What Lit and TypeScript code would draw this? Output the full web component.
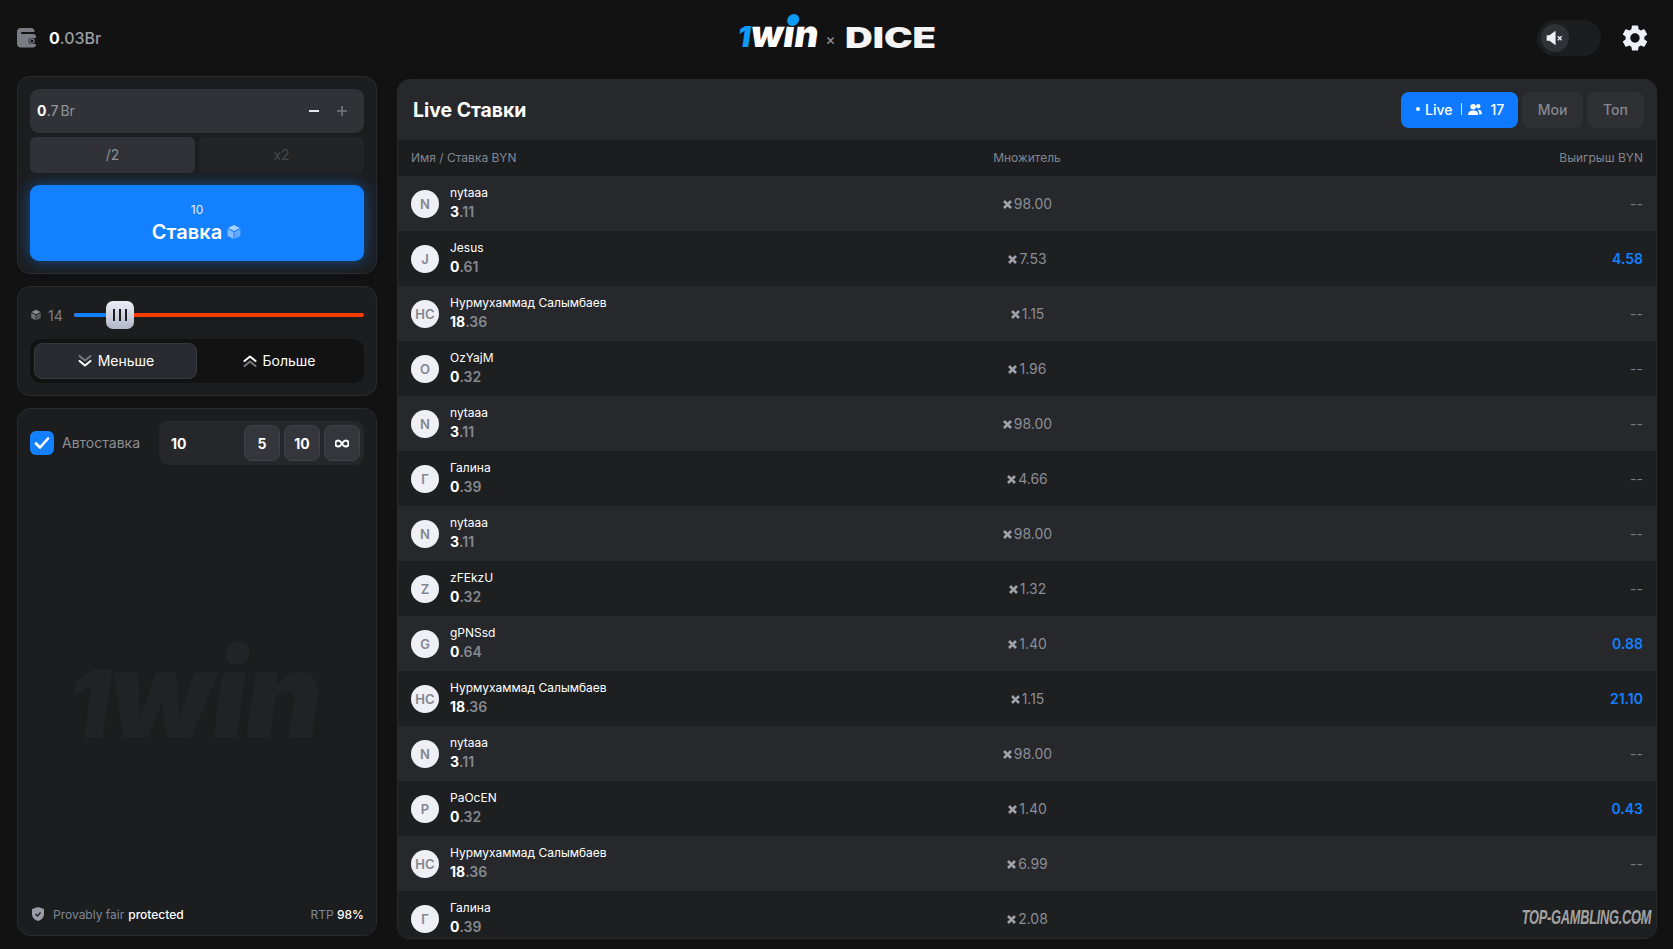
import { LitElement, html, css, svg } from "lit";
import { customElement } from "lit/decorators.js";

type Row = { i: string; n: string; a: string; b: string; m: string; w?: string };
const NY: Row = { i: "N", n: "nytaaa", a: "3", b: ".11", m: "98.00" };
const NS = "Нурмухаммад Салымбаев";
const rows: Row[] = [
  NY,
  { i: "J", n: "Jesus", a: "0", b: ".61", m: "7.53", w: "4.58" },
  { i: "НС", n: NS, a: "18", b: ".36", m: "1.15" },
  { i: "O", n: "OzYajM", a: "0", b: ".32", m: "1.96" },
  NY,
  { i: "Г", n: "Галина", a: "0", b: ".39", m: "4.66" },
  NY,
  { i: "Z", n: "zFEkzU", a: "0", b: ".32", m: "1.32" },
  { i: "G", n: "gPNSsd", a: "0", b: ".64", m: "1.40", w: "0.88" },
  { i: "НС", n: NS, a: "18", b: ".36", m: "1.15", w: "21.10" },
  NY,
  { i: "P", n: "PaOcEN", a: "0", b: ".32", m: "1.40", w: "0.43" },
  { i: "НС", n: NS, a: "18", b: ".36", m: "6.99" },
  { i: "Г", n: "Галина", a: "0", b: ".39", m: "2.08" },
];

const cube = (c: string, s: number) => html`<svg width=${s} height=${s} viewBox="0 0 16 16" class="cube">
  <path d="M8 1l6 3-6 3-6-3z" fill=${c}/><path d="M1.6 5l5.9 3v7l-5.9-3z" fill=${c} opacity=".75"/><path d="M14.4 5l-5.9 3v7l5.9-3z" fill=${c} opacity=".55"/></svg>`;

const chev = (up: boolean) => html`<svg width="16" height="16" viewBox="0 0 16 16" fill="none" stroke-width="2" stroke-linecap="round" stroke-linejoin="round">
  ${up
    ? svg`<path d="M2.5 8L8 3.5 13.5 8" stroke="#fff"/><path d="M2.5 13L8 8.5 13.5 13" stroke="#77797e"/>`
    : svg`<path d="M2.5 3L8 7.5 13.5 3" stroke="#77797e"/><path d="M2.5 8L8 12.5 13.5 8" stroke="#fff"/>`}
</svg>`;

@customElement("app-root")
export class AppRoot extends LitElement {
  static styles = css`
    :host { display: block; width: 1673px; height: 949px; overflow: hidden; background: #121213; color: #fff;
      font-family: Inter, "Noto Sans", sans-serif; }
    * { box-sizing: border-box; }
    header { height: 76px; padding: 0 25px 0 17px; display: grid; grid-template-columns: 1fr auto 1fr; align-items: center; }
    .bal { display: flex; align-items: center; gap: 12px; font-size: 16px; font-weight: 500; color: #9a9da5; margin-top: -1px; }
    .bal b { color: #fff; font-weight: 700; }
    .logo { display: flex; align-items: center; height: 40px; margin-left: 6px; }
    .win { position: relative; font-weight: 900; font-size: 37px; letter-spacing: 0; line-height: 40px; transform: skewX(-8deg); color: #fff; width: 78px; margin-top: -6px; white-space: nowrap; }
    .win em { font-style: normal; font-size: 29px; color: #0e9bf5; }
    .win i { position: absolute; left: 47px; top: 0; width: 12px; height: 12px; border-radius: 50%; background: #0e9bf5; box-shadow: 0 0 0 1px #121213; }
    .x { color: #8a8b90; font-size: 15px; margin: 3px 9px 0 9px; font-weight: 500; }
    .dice { font-weight: 900; font-size: 28px; transform: scaleX(1.37); transform-origin: left; width: 88px; color: #f4f4f4; line-height: 40px; margin-top: -1px; }
    .tools { display: flex; justify-content: flex-end; align-items: center; gap: 21px; }
    .toggle { width: 64px; height: 36px; border-radius: 18px; background: #1c1d1f; padding: 4px; }
    .knob { width: 28px; height: 28px; border-radius: 50%; background: #303136; display: flex; align-items: center; justify-content: center; }

    main { display: flex; gap: 20px; height: 873px; padding: 0 16px 0 17px; }
    .left { width: 360px; flex: none; display: flex; flex-direction: column; gap: 12px; height: 860px; }
    .card { background: #1c1d1f; border: 1px solid #2a2b2e; border-radius: 13px; padding: 12px; }
    .amount { height: 44px; border-radius: 9px; background: #313237; display: flex; align-items: center; padding: 0 8px 2px 7px; font-size: 14px; color: #8f9299; font-weight: 500; }
    .amount b { color: #fff; font-weight: 700; }
    .amount .unit { margin-left: 2px; font-weight: 400; }
    .amount .pm { margin-left: auto; display: flex; gap: 16px; align-items: center; padding-right: 8px; margin-top: 2px; }
    .halves { display: grid; grid-template-columns: 1fr 1fr; gap: 4px; margin-top: 4px; }
    .halves div { height: 36px; padding-bottom: 2px; border-radius: 6px; background: #313237; color: #8f9299; font-size: 14px; display: flex; align-items: center; justify-content: center; }
    .halves div + div { background: #232427; color: #46474c; }
    .bet { margin-top: 12px; height: 76px; border-radius: 9px; background: #1280ff; box-shadow: 0 0 16px rgba(18, 128, 255, .5);
      display: flex; flex-direction: column; align-items: center; justify-content: center; }
    .bet small { font-size: 12px; line-height: 16px; color: #e3eeff; }
    .bet strong { font-size: 20px; line-height: 26px; font-weight: 600; display: flex; align-items: center; gap: 4px; padding-top: 1px; }
    .sl { display: flex; align-items: center; height: 28px; margin-top: 2px; font-size: 14px; color: #7c7f87; }
    .sl .cube { margin-right: 6px; }
    .track { position: relative; flex: 1; height: 4px; border-radius: 2px; margin-left: 11px; background: #fb3c00; }
    .track::before { content: ""; position: absolute; left: 0; top: 0; bottom: 0; width: 40px; background: #1280ff; border-radius: 2px; }
    .thumb { position: absolute; left: 32px; top: -12px; width: 28px; height: 28px; border-radius: 7px; background: linear-gradient(180deg, #eceef5, #b3b7cb);
      display: flex; align-items: center; justify-content: center; gap: 4px; }
    .thumb span { width: 2px; height: 12px; background: #1c1d1f; }
    .seg { margin-top: 10px; height: 44px; border-radius: 11px; background: #121213; padding: 4px; display: grid; grid-template-columns: 1fr 1fr; font-size: 14px; font-weight: 400; }
    .seg div { display: flex; align-items: center; justify-content: center; gap: 5px; border-radius: 8px; padding-bottom: 1px; }
    .seg .on { background: #2a2b30; border: 1px solid #38393e; }
    .auto { flex: 1; display: flex; flex-direction: column; position: relative; padding-bottom: 13px; }
    .arow { display: flex; align-items: center; }
    .chk { width: 24px; height: 24px; border-radius: 6px; background: #1280ff; display: flex; align-items: center; justify-content: center; }
    .arow label { margin-left: 8px; font-size: 14px; color: #8b8e95; flex: 1; padding-bottom: 1px; }
    .igrp { width: 205px; height: 44px; border-radius: 9px; background: #26272a; display: flex; align-items: center; padding: 4px; gap: 4px; }
    .igrp span { flex: 1; padding-left: 8px; font-size: 14px; font-weight: 700; }
    .igrp button { all: unset; box-sizing: border-box; width: 36px; height: 36px; border-radius: 8px; background: #35363b; border: 1px solid #404146; color: #fff; font: 700 14px Inter, sans-serif;
      display: flex; align-items: center; justify-content: center; }
    .wm { position: absolute; left: 52px; top: 226px; color: #212225; font-weight: 900; font-size: 120px; line-height: 120px; letter-spacing: -2.5px; transform: skewX(-8deg); white-space: nowrap; }
    .wm em { font-style: normal; font-size: 94px; }
    .wm i { position: absolute; left: 149px; top: 6px; width: 24px; height: 24px; border-radius: 50%; background: #232427; box-shadow: 0 0 0 2px #1c1d1f; }
    .foot { margin-top: auto; display: flex; align-items: center; font-size: 12px; color: #7d8796; }
    .foot svg { margin-right: 7px; }
    .foot b { color: #fff; font-weight: 500; margin-left: 4px; }
    .foot .rtp { margin-left: auto; }
    .foot .rtp b { margin-left: 0; }

    .panel { position: relative; flex: 1; margin-top: 3px; height: 860px; border: 1px solid #2a2b2e; border-top: 0; border-radius: 13px; overflow: hidden; background: #1c1d1f; }
    .ph { height: 61px; background: #27282b; display: flex; align-items: center; padding: 0 12px 0 15px; }
    .ph h2 { margin: 0; font-size: 19.4px; font-weight: 700; flex: 1; }
    .tab { height: 36px; border-radius: 8px; background: #2f3033; color: #85888f; font-size: 14px; font-weight: 500; display: flex; align-items: center; justify-content: center; margin-left: 4px; padding-bottom: 1px; }
    .tab.live { width: 117px; background: #0f7aff; color: #fff; gap: 5px; margin-left: 0; justify-content: flex-start; padding-left: 15px; }
    .tab.m { width: 61px; } .tab.t { width: 57px; }
    .tab .sep { width: 1px; height: 12px; background: #d5e6ff; margin: 0 1px 0 4px; }
    .tab .cnt { margin-left: 3px; }
    .dot { width: 4px; height: 4px; border-radius: 50%; background: #fff; }
    .cols { display: grid; grid-template-columns: 1fr 1fr 1fr; align-items: center; padding: 0 13px; }
    .th { height: 36px; font-size: 12px; color: #7f8792; background: #1c1d1f; padding-bottom: 2px; }
    .c { text-align: center; } .r { text-align: right; }
    .row { height: 55px; background: #1e1f21; }
    .row.alt { background: #27282b; }
    .who { display: flex; align-items: center; gap: 11px; }
    .av { width: 28px; height: 28px; flex: none; border-radius: 50%; background: #eef0f5; color: #83868e; font-size: 13px; font-weight: 600; display: flex; align-items: center; justify-content: center; }
    .who > div + div { margin-top: -3px; }
    .nm { font-size: 12px; line-height: 17px; font-weight: 400; white-space: nowrap; }
    .amt { font-size: 14px; line-height: 19px; font-weight: 700; color: #fff; margin-top: 1px; }
    .amt span { color: #85888f; font-weight: 600; }
    .mul { display: flex; align-items: center; justify-content: center; font-size: 14px; color: #8a8d95; gap: 1px; }
    .mul svg { margin-top: 1px; }
    .w { font-size: 14px; font-weight: 600; color: #1280ff; }
    .w.n { color: #767b85; font-weight: 400; }
    .mark { position: absolute; right: 5px; bottom: 11px; font: italic 700 20px/20px "Liberation Sans", sans-serif; letter-spacing: -.4px; color: #a3a3a3; transform: scaleX(.64); transform-origin: right; white-space: nowrap; }
  `;

  render() {
    return html`
      <header>
        <div class="bal">
          <svg width="20" height="20" viewBox="0 0 20 20"><path d="M4 0h10a3.5 3.5 0 013.5 3.5V4H5a1 1 0 000 2h11a3 3 0 013 3v1h-4.5a3 3 0 000 6H19v.5a3 3 0 01-3 3H4a4 4 0 01-4-4V4a4 4 0 014-4z" fill="#7b7d85"/><circle cx="15" cy="13" r="2.2" fill="none" stroke="#7b7d85" stroke-width="1.2"/></svg>
          <span><b>0</b>.03Br</span>
        </div>
        <div class="logo">
          <div class="win"><em>1</em>win<i></i></div>
          <div class="x">×</div>
          <div class="dice">DICE</div>
        </div>
        <div class="tools">
          <div class="toggle"><div class="knob">
            <svg width="20" height="20" viewBox="0 0 18 18"><path d="M1.5 6.5H4L9.5 2.5v13L4 11.5H1.5z" fill="#eef0f5"/><path d="M11.5 7.5l3.5 3.5M15 7.5L11.5 11" stroke="#eef0f5" stroke-width="1.2"/></svg>
          </div></div>
          <svg width="26" height="26" viewBox="2 2 20 20"><path fill="#eef0f8" d="M19.14 12.94c.04-.3.06-.61.06-.94 0-.32-.02-.64-.07-.94l2.03-1.58c.18-.14.23-.41.12-.61l-1.92-3.32c-.12-.22-.37-.29-.59-.22l-2.39.96c-.5-.38-1.03-.7-1.62-.94l-.36-2.54c-.04-.24-.24-.41-.48-.41h-3.84c-.24 0-.43.17-.47.41l-.36 2.54c-.59.24-1.13.57-1.62.94l-2.39-.96c-.22-.08-.47 0-.59.22L2.74 8.87c-.12.21-.08.47.12.61l2.03 1.58c-.05.3-.09.63-.09.94s.02.64.07.94l-2.03 1.58c-.18.14-.23.41-.12.61l1.92 3.32c.12.22.37.29.59.22l2.39-.96c.5.38 1.03.7 1.62.94l.36 2.54c.05.24.24.41.48.41h3.84c.24 0 .44-.17.47-.41l.36-2.54c.59-.24 1.13-.56 1.62-.94l2.39.96c.22.08.47 0 .59-.22l1.92-3.32c.12-.22.07-.47-.12-.61l-2.01-1.58zM12 15.6c-1.98 0-3.6-1.62-3.6-3.6s1.62-3.6 3.6-3.6 3.6 1.62 3.6 3.6-1.62 3.6-3.6 3.6z"/></svg>
        </div>
      </header>
      <main>
        <div class="left">
          <section class="card">
            <div class="amount"><b>0</b>.7<span class="unit">Br</span>
              <div class="pm">
                <svg width="12" height="12" viewBox="0 0 12 12"><path d="M1 6h10" stroke="#e8e9ee" stroke-width="2"/></svg>
                <svg width="12" height="12" viewBox="0 0 12 12"><path d="M1 6h10M6 1v10" stroke="#77797e" stroke-width="1.6"/></svg>
              </div>
            </div>
            <div class="halves"><div>/2</div><div>x2</div></div>
            <div class="bet"><small>10</small><strong>Ставка ${cube("#a9cfff", 16)}</strong></div>
          </section>
          <section class="card">
            <div class="sl">${cube("#8b8d93", 12)}14
              <div class="track"><div class="thumb"><span></span><span></span><span></span></div></div>
            </div>
            <div class="seg">
              <div class="on">${chev(false)}Меньше</div>
              <div>${chev(true)}Больше</div>
            </div>
          </section>
          <section class="card auto">
            <div class="arow">
              <div class="chk"><svg width="16" height="14" viewBox="0 0 16 14" fill="none"><path d="M2 7.5l4 4L14 2.5" stroke="#fff" stroke-width="2.6" stroke-linecap="round" stroke-linejoin="round"/></svg></div>
              <label>Автоставка</label>
              <div class="igrp"><span>10</span><button>5</button><button>10</button>
                <button><svg width="14" height="9" viewBox="0 0 16 10" fill="none"><path d="M8 5C6.5 2.5 5.5 1.5 4 1.5a3.5 3.5 0 000 7c1.5 0 2.5-1 4-3.5s2.5-3.5 4-3.5a3.5 3.5 0 010 7c-1.5 0-2.5-1-4-3.5z" stroke="#fff" stroke-width="2.2"/></svg></button>
              </div>
            </div>
            <div class="wm"><em>1</em>win<i></i></div>
            <div class="foot">
              <svg width="16" height="16" viewBox="0 0 16 16"><path d="M8 1l6 2v5c0 3.5-2.6 6-6 7-3.4-1-6-3.5-6-7V3z" fill="#9a9da8"/><path d="M5.5 8l2 2 3-3.5" stroke="#1c1d1f" stroke-width="1.3" fill="none"/></svg>
              Provably fair <b>protected</b>
              <span class="rtp">RTP <b>98%</b></span>
            </div>
          </section>
        </div>
        <section class="panel">
          <div class="ph">
            <h2>Live Ставки</h2>
            <div class="tab live"><span class="dot"></span>Live<span class="sep"></span>
              <svg width="14" height="13" viewBox="0 0 15 14"><circle cx="5.5" cy="4" r="3" fill="#fff"/><path d="M0 13c0-3.500 2.200-5 5.500-5s5.500 1.500 5.500 5z" fill="#fff"/><circle cx="11" cy="3.500" r="2.300" fill="#fff"/><path d="M10.500 7.200c2.800-.2 4.500 1.400 4.500 4.800h-3c0-2-.5-3.500-1.500-4.800z" fill="#fff"/></svg>
              <span class="cnt">17</span></div>
            <div class="tab m">Мои</div>
            <div class="tab t">Топ</div>
          </div>
          <div class="cols th"><div>Имя / Ставка BYN</div><div class="c">Множитель</div><div class="r">Выигрыш BYN</div></div>
          ${rows.map((r, i) => html`
            <div class="cols row ${i % 2 === 0 ? "alt" : ""}">
              <div class="who"><div class="av">${r.i}</div>
                <div><div class="nm">${r.n}</div><div class="amt">${r.a}<span>${r.b}</span></div></div></div>
              <div class="mul"><svg width="11" height="11" viewBox="0 0 11 11"><path d="M2 2l7 7M9 2l-7 7" stroke="#a0a2a9" stroke-width="2.6"/></svg>${r.m}</div>
              <div class="r w ${r.w ? "" : "n"}">${r.w ?? "--"}</div>
            </div>`)}
          <div class="mark">TOP-GAMBLING.COM</div>
        </section>
      </main>
    `;
  }
}
